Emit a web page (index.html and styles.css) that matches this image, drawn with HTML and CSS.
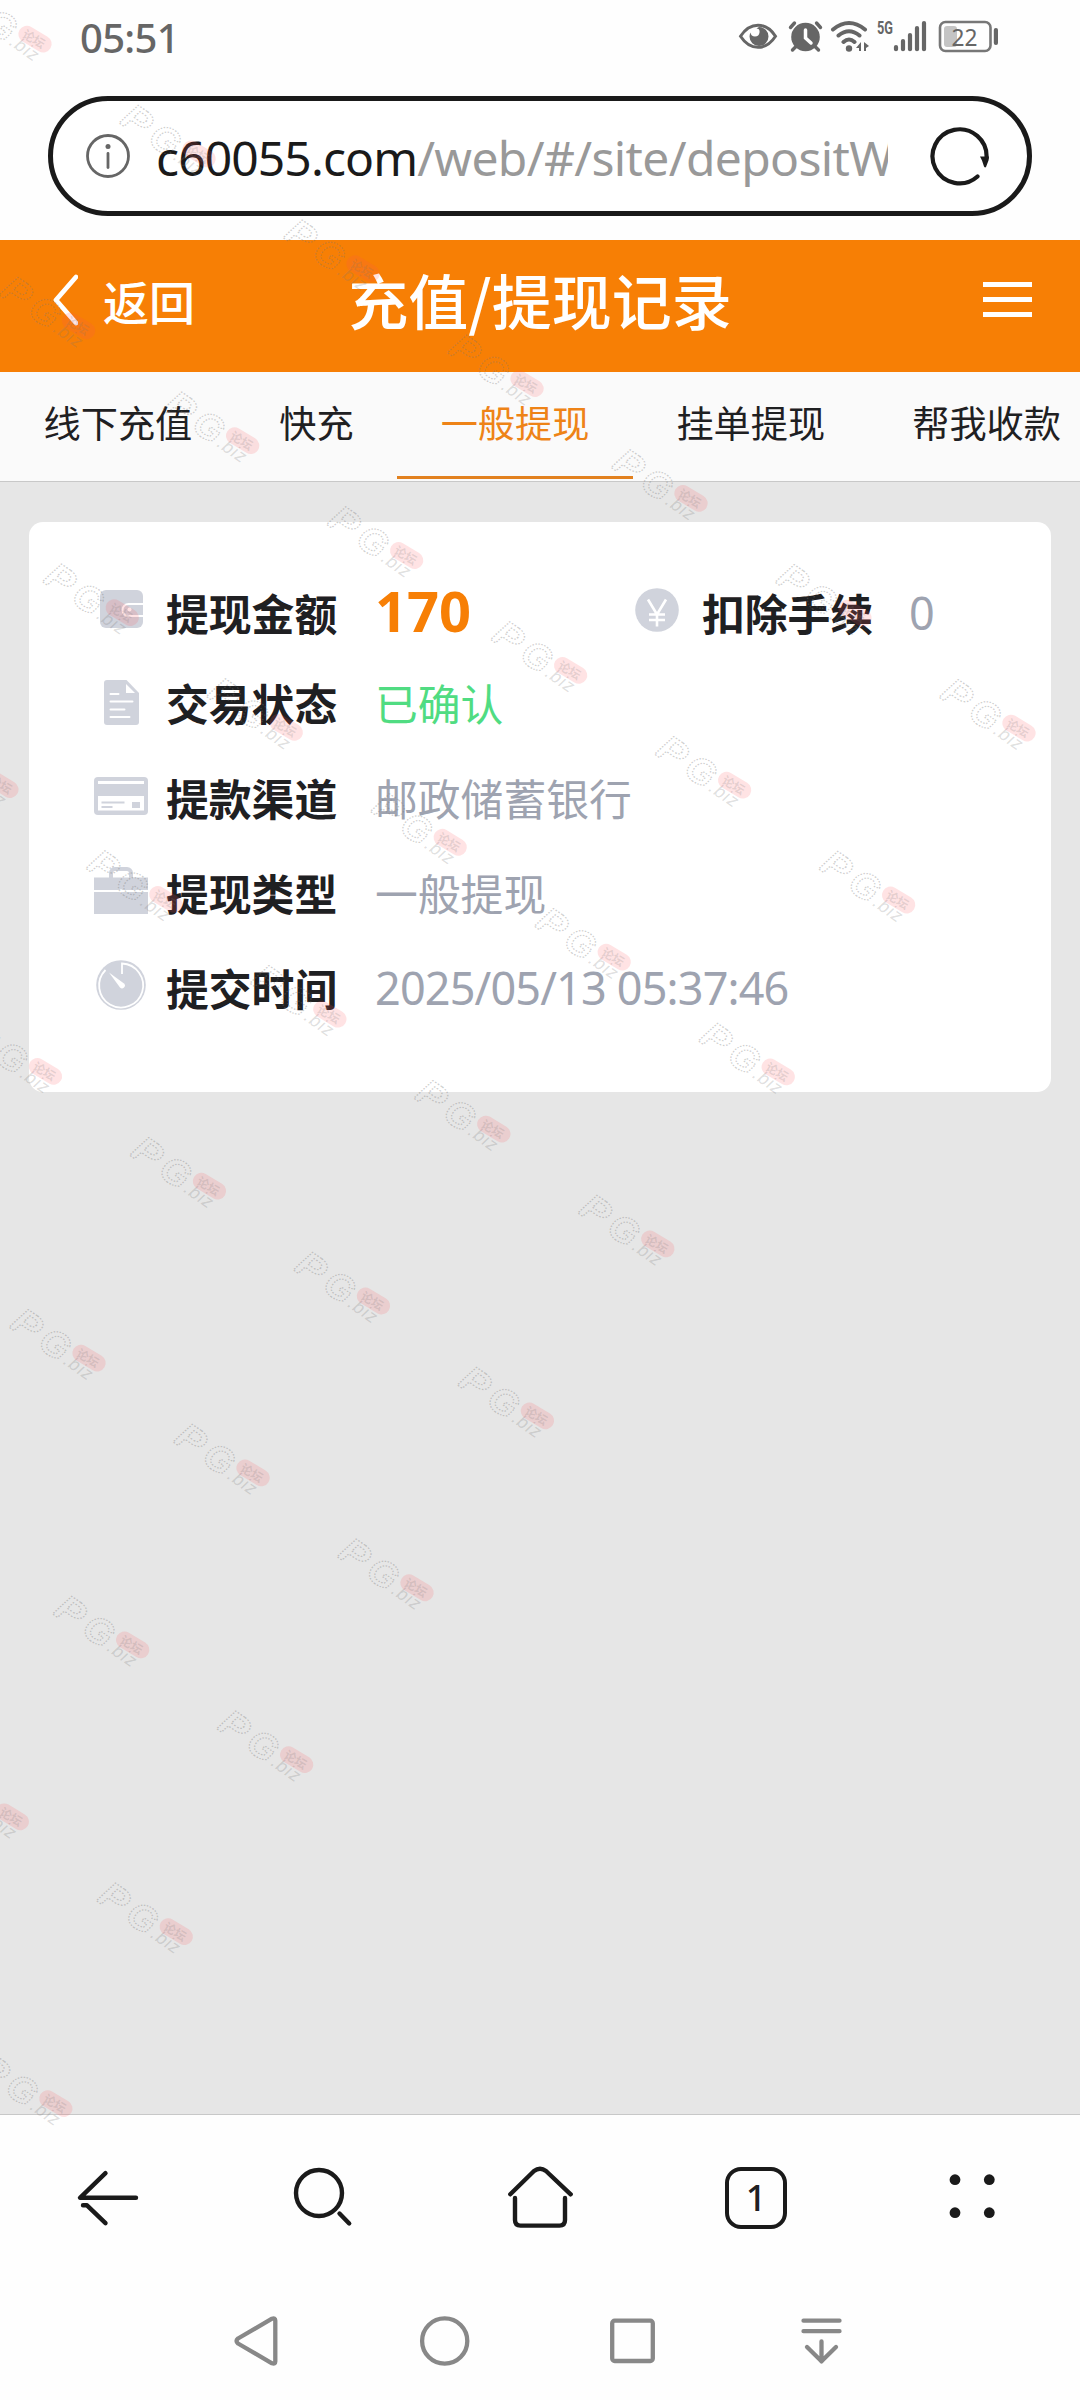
FILE: index.html
```html
<!DOCTYPE html>
<html lang="zh-CN">
<head>
<meta charset="utf-8">
<title>充值/提现记录</title>
<link rel="stylesheet" href="styles.css">
</head>
<body>
<div class="screen">
  <header class="status">
    <span class="clock">05:51</span>
    <svg class="status-icons" width="262" height="36" viewBox="738 18 262 36">
      <g fill="none" stroke="#666" stroke-width="3">
        <path d="M740.5 36.3C750 21.5 766 21.5 775.5 36.3C766 51 750 51 740.5 36.3Z"/>
        <path d="M790.500 27.500l4-4.500M820.500 27.500l-4-4.500M796 46.500l-3.500 3.500M815 46.500l3.500 3.500" stroke-width="3.400" stroke-linecap="round"/>
        <path d="M833 29.500Q849 16.500 865 29.500M838.500 35.500Q849 27 859.500 35.500M843.500 42Q849 37 854.500 42" stroke-width="4" stroke-linecap="round"/>
      </g>
      <path fill="#666" d="M759 27a9.500 9.500 0 1 1-9.500 9.500q.2-2.500 1-4q.5 4 4.500 4t4.500-4t-3-4q1-1 2.500-1.500Z"/>
      <circle cx="805.500" cy="37" r="14.300" fill="#666"/>
      <path d="M805.500 30v8l5.500 5" fill="none" stroke="#fff" stroke-width="3.500" stroke-linecap="round"/>
      <circle cx="849" cy="48.500" r="3.200" fill="#666"/>
      <path fill="#666" d="M856 48l5-6v9h-2v-3zM869 46l-5-4v9h2v-3z"/>
      <text class="network" x="877" y="34" textLength="16" lengthAdjust="spacingAndGlyphs">5G</text>
      <path d="M896 47v2.200M903 41v8.200M910 35v14.200M917 28v21.200M924 23v26.200" stroke="#666" stroke-width="4.200" stroke-linecap="round"/>
      <rect x="944" y="26" width="13" height="21" rx="3" fill="#c4c4c4"/>
      <rect x="940" y="22" width="50.500" height="29" rx="5.500" fill="none" stroke="#777" stroke-width="2.600"/>
      <rect x="993.800" y="28" width="4.200" height="17" rx="2" fill="#666"/>
      <text class="battery" x="951.500" y="45.500" textLength="26" lengthAdjust="spacingAndGlyphs">22</text>
    </svg>
  </header>
  <div class="address">
    <svg width="44" height="44" viewBox="0 0 44 44" fill="none" stroke="#666" stroke-width="2.800">
      <circle cx="22" cy="22" r="20.500"/><path d="M22 19.500v14" stroke-linecap="round"/><circle cx="22" cy="12.500" r="2.500" fill="#666" stroke="none"/>
    </svg>
    <div class="url"><span class="host">c60055.com</span><span class="path">/web/#/site/depositW</span></div>
    <svg class="reload" width="62" height="62" viewBox="0 0 62 62">
      <path d="M48.500 51.500A27 27 0 1 1 57.500 33" fill="none" stroke="#1a1a1a" stroke-width="4.200" stroke-linecap="round"/>
      <path fill="#1a1a1a" d="M51 31.500h9l-.500 4l-2.500 6.500q-1 1-2-.500l-2-6z"/>
    </svg>
  </div>
  <div class="titlebar">
    <a class="back"><svg width="30" height="56" viewBox="0 0 30 56"><path d="M28 5L8 28L28 51" fill="none" stroke="#fff" stroke-width="4.800" stroke-linecap="round" stroke-linejoin="round"/></svg><span>返回</span></a>
    <h1>充值/提现记录</h1>
    <div class="menu"><i></i><i></i><i></i></div>
  </div>
  <nav class="tabs">
    <a>线下充值</a><a>快充</a><a class="active">一般提现</a><a>挂单提现</a><a>帮我收款</a>
  </nav>
  <main>
    <section class="card">
      <div class="row first">
        <svg class="icon" width="56" height="56" viewBox="0 0 56 56">
          <rect x="7" y="7" width="43" height="38" rx="6" fill="#d0d3dc"/>
          <path d="M50 21H35.500a6 6 0 0 0 0 12H50" fill="none" stroke="#fff" stroke-width="2"/><circle cx="36.500" cy="26.500" r="2" fill="#fff"/>
        </svg>
        <span class="label">提现金额</span><span class="amount">170</span>
        <svg class="icon yen" width="44" height="44" viewBox="0 0 44 44">
          <circle cx="22" cy="22" r="21.800" fill="#d0d3dc"/>
          <path d="M13 11.500l9 15l9-15M22 26v12.500M14 26.500h16M14 32h16" fill="none" stroke="#fff" stroke-width="2.600"/>
        </svg>
        <span class="label">扣除手续</span><span class="fee">0</span>
      </div>
      <div class="row">
        <svg class="icon" width="56" height="56" viewBox="0 0 56 56">
          <path d="M14 5h19.500L46 18v29a3 3 0 0 1-3 3H14a3 3 0 0 1-3-3V8a3 3 0 0 1 3-3Z" fill="#d0d3dc"/>
          <path d="M33 9v9h9z" fill="#fff"/><path d="M17.500 19h8M17.500 26.500h22M17.500 34.500h14M17.500 42h19" stroke="#fff" stroke-width="2" stroke-linecap="round"/>
        </svg>
        <span class="label">交易状态</span><span class="value ok">已确认</span>
      </div>
      <div class="row">
        <svg class="icon" width="56" height="56" viewBox="0 0 56 56">
          <rect x="1" y="7" width="54" height="38" rx="4" fill="#d0d3dc"/>
          <path d="M5 11h46v3H5zM5 26h46v14.500H5z" fill="#fff"/><path d="M8.500 32.500h23M8.500 37h11" stroke="#d0d3dc" stroke-width="2"/><rect x="39" y="32" width="8" height="6" fill="#d0d3dc"/>
        </svg>
        <span class="label">提款渠道</span><span class="value">邮政储蓄银行</span>
      </div>
      <div class="row">
        <svg class="icon" width="56" height="56" viewBox="0 0 56 56">
          <path d="M1 12.500h54V25H1zM1 27h54v22H1z" fill="#d0d3dc"/>
          <path d="M18 13V8a4 4 0 0 1 4-4h12a4 4 0 0 1 4 4v5" fill="none" stroke="#d0d3dc" stroke-width="4"/><circle cx="28" cy="26" r="1.700" fill="#fff"/>
        </svg>
        <span class="label">提现类型</span><span class="value">一般提现</span>
      </div>
      <div class="row">
        <svg class="icon" width="56" height="56" viewBox="0 0 56 56">
          <circle cx="28" cy="25" r="24.800" fill="#d0d3dc"/>
          <path d="M29 14V3.500A22 22 0 1 1 12.500 10" fill="none" stroke="#fff" stroke-width="1.800"/>
          <path d="M16 12.500L31 23.500a2.800 2.800 0 0 1-4 4z" fill="#fff"/>
        </svg>
        <span class="label">提交时间</span><span class="value date">2025/05/13 05:37:46</span>
      </div>
    </section>
  </main>
  <footer class="toolbar">
    <svg width="66" height="66" viewBox="75 2166 66 66"><path d="M105.500 2174.200L80 2198.800H136M83 2206.300L87 2206.300L105.500 2224.200"/></svg>
    <svg width="66" height="66" viewBox="291 2166 66 66"><circle cx="319" cy="2194" r="23"/><path d="M339.500 2214.500l9.700 10"/></svg>
    <svg width="66" height="66" viewBox="507 2166 66 66"><path d="M510.300 2195.300L534 2172Q540 2167.500 546 2172L570.700 2195.300M515 2199V2221Q515 2226.600 520.500 2226.600H559.500Q565 2226.600 565 2221V2199"/></svg>
    <div class="count">1</div>
    <svg width="66" height="66" viewBox="939 2166 66 66"><g fill="#1a1a1a" stroke="none"><circle cx="955" cy="2180.700" r="5.400"/><circle cx="989.300" cy="2180.700" r="5.400"/><circle cx="955" cy="2213.700" r="5.400"/><circle cx="989.300" cy="2213.700" r="5.400"/></g></svg>
  </footer>
  <div class="sysnav">
    <svg width="60" height="60" viewBox="226.500 2311 60 60"><path d="M237.500 2338.500Q234.500 2341 237.500 2343.500L271.500 2363.300Q274.800 2364.500 274.800 2361.500V2320.500Q274.800 2317.500 271.500 2318.700Z"/></svg>
    <svg width="60" height="60" viewBox="414.500 2311 60 60"><circle cx="444.200" cy="2341" r="22.600"/></svg>
    <svg width="60" height="60" viewBox="602.500 2311 60 60"><rect x="611.700" y="2320.700" width="40.600" height="40.300" rx="2.500"/></svg>
    <svg width="60" height="60" viewBox="790.500 2311 60 60"><path d="M803 2320.700h36M803 2331.200h36M821 2341.500v20M806.500 2347l14.500 14.300l14.500-14.300"/></svg>
  </div>
  <svg class="watermarks" width="1080" height="2400" viewBox="0 0 1080 2400" aria-hidden="true">
    <defs>
      <g id="mark">
        <text class="wm-pg" x="10" y="17" textLength="28" lengthAdjust="spacingAndGlyphs">P</text><text class="wm-pg" x="44" y="17">G</text>
        <text class="wm-biz" x="75" y="16">.biz</text>
        <g transform="rotate(-4 94 -3.500)"><rect x="76" y="-12" width="36" height="17" rx="8.500" fill="#ff5058" fill-opacity=".16"/><text class="wm-pill" x="81" y="1.500">论坛</text></g>
      </g>
      <g id="line">
        <use href="#mark"/><use href="#mark" x="-200.200"/><use href="#mark" x="-400.400"/><use href="#mark" x="-600.600"/><use href="#mark" x="-800.800"/><use href="#mark" x="-1001"/><use href="#mark" x="-1201.200"/>
      </g>
    </defs>
    <g transform="translate(940 677) rotate(35)">
      <use href="#line"/><use href="#line" y="209.900"/><use href="#line" y="419.800"/><use href="#line" y="629.700"/><use href="#line" y="839.600"/><use href="#line" y="1049.500"/><use href="#line" y="1259.400"/><use href="#line" y="1469.300"/><use href="#line" y="1679.200"/>
    </g>
  </svg>
</div>
</body>
</html>
```
FILE: styles.css
```css
* { box-sizing: border-box; }
body { margin: 0; background: #fff; font-family: "Noto Sans", "Noto Sans CJK SC", sans-serif; color: #1f2022; }
svg { display: block; flex: none; }
.screen { position: relative; width: 1080px; height: 2400px; overflow: hidden; display: flex; flex-direction: column; background: #fefefe; }

.status { height: 96px; padding: 0 80px 24px; display: flex; align-items: center; justify-content: space-between; color: #666; }
.clock { padding-top: 4px; font-size: 40px; line-height: 1; letter-spacing: -.700px; font-weight: 500; }
.network { font: 700 18px "Roboto", sans-serif; fill: #666; }
.battery { font: 24px "Noto Sans", sans-serif; fill: #666; }

.address { height: 120px; margin: 0 48px; padding: 0 36px 0 33px; border: 5px solid #1a1a1a; border-radius: 60px; display: flex; align-items: center; background: #fff; }
.url { width: 732px; margin-left: 26px; padding-top: 3px; overflow: hidden; white-space: nowrap; font-size: 48px; line-height: 70px; }
.host { color: #1a1a1a; letter-spacing: -.900px; }
.path { color: #999; letter-spacing: -.650px; }
.reload { margin-left: auto; }

.titlebar { height: 132px; margin-top: 24px; padding: 0 48px 12px; display: grid; grid-template-columns: 1fr auto 1fr; align-items: center; background: #f77f05; color: #fff; font-family: "Noto Sans CJK SC", sans-serif; font-weight: 500; }
.back { display: flex; align-items: center; gap: 25px; font-size: 46px; line-height: 1; }
h1 { margin: 0 0 2px; font-size: 60px; line-height: 1; font-weight: 500; }
.menu { justify-self: end; width: 49px; display: grid; gap: 10px; margin-bottom: 2px; }
.menu i { height: 5px; background: #fff; }

.tabs { height: 110px; display: flex; overflow: hidden; background: #fafafa; border-bottom: 1px solid #c8c8c8; font: 37.200px/1 "Noto Sans CJK SC", sans-serif; }
.tabs a { flex: none; height: 107px; padding: 32px 43.500px 0; }
.tabs .active { color: #ee8317; border-bottom: 3px solid #e2811f; }

main { flex: 1; padding: 40px 29px; background: #e6e6e6; }
.card { height: 570px; padding: 45px 64px 0; border-radius: 14px; background: #fff; }
.row { height: 95px; display: flex; align-items: center; }
.row.first { height: 88px; }
.label { width: 172px; margin-left: 17px; font: 700 42.800px/1 "Noto Sans CJK SC", sans-serif; }
.value { margin-left: 37px; font: 42.800px/1 "Noto Sans CJK SC", sans-serif; color: #9ea3b0; }
.value.ok { color: #50dc82; }
.value.date, .fee { font: 45px/1 "Noto Sans", sans-serif; color: #9ea3b0; letter-spacing: -.850px; }
.first .label, .first .fee { margin-top: 2px; }
.amount { width: 260px; margin: 0 0 2px 37px; font-size: 56px; line-height: 1; font-weight: 700; color: #f77f05; }
.yen { margin: 0 0 2px; }
.yen + .label { margin-left: 23px; }
.fee { margin-left: 35px; }

.toolbar { height: 170px; padding-bottom: 3px; border-top: 1px solid #c8c8c8; display: grid; grid-template-columns: repeat(5, 216px); justify-items: center; align-items: center; }
.toolbar svg { fill: none; stroke: #1a1a1a; stroke-width: 4.400; stroke-linecap: round; stroke-linejoin: round; }
.count { width: 62px; height: 62px; border: 4.400px solid #1a1a1a; border-radius: 16px; font-size: 36px; line-height: 54px; text-align: center; font-weight: 500; }
.sysnav { height: 116px; padding: 0 164.500px 2px 162.500px; display: flex; justify-content: space-around; align-items: center; }
.sysnav svg { fill: none; stroke: #888; stroke-width: 4.300; stroke-linecap: round; stroke-linejoin: round; }

.watermarks { position: absolute; inset: 0; pointer-events: none; }
.wm-pg { font: italic 700 37px "Liberation Sans", sans-serif; fill: none; stroke: #777; stroke-opacity: .36; stroke-width: 1.300; stroke-dasharray: 1.500 1.500; }
.wm-biz { font: italic 18px "Liberation Sans", sans-serif; letter-spacing: 1px; fill: #777; fill-opacity: .24; }
.wm-pill { font: 700 12px "Noto Sans CJK SC", sans-serif; fill: #777; fill-opacity: .2; }
```
